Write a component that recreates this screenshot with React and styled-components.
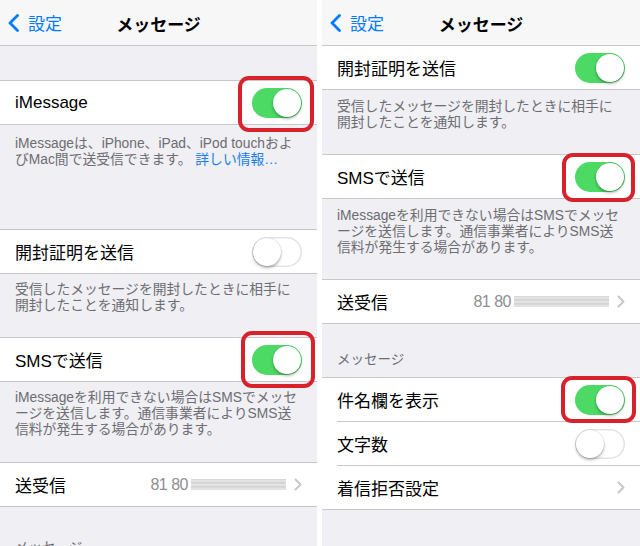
import React from "react";
import styled, { createGlobalStyle } from "styled-components";

const GlobalStyle = createGlobalStyle`
  html, body {
    margin: 0;
    padding: 0;
    background: #ffffff;
  }
  body {
    font-family: "Liberation Sans", "Noto Sans CJK JP", sans-serif;
    -webkit-font-smoothing: antialiased;
  }
`;

const Screens = styled.div`
  display: flex;
  gap: 5px;
  width: 640px;
  height: 546px;
  background: #ffffff;
`;

const Screen = styled.div`
  flex: none;
  width: ${(p) => p.$w}px;
  height: 546px;
  overflow: hidden;
  background: #efeff4;
  display: flex;
  flex-direction: column;
`;

const NavBar = styled.header`
  flex: none;
  height: 45px;
  border-bottom: 1px solid #c8c7cc;
  background: #f7f7f8;
  display: grid;
  grid-template-columns: 1fr auto 1fr;
  align-items: center;
  padding: 0 8px;
`;

const Back = styled.div`
  display: flex;
  align-items: center;
  gap: 9px;
  color: #007aff;
  font-size: 17px;
`;

const Title = styled.h1`
  margin: 0;
  padding-top: 2px;
  font-size: 17px;
  font-weight: 700;
  color: #000;
`;

const Group = styled.section`
  flex: none;
  background: #ffffff;
  border-top: ${(p) => (p.$noTop ? "none" : "1px solid #c8c7cc")};
  border-bottom: 1px solid #c8c7cc;
  margin-top: ${(p) => p.$top || 0}px;
`;

const Row = styled.div`
  height: 43px;
  display: flex;
  align-items: center;
  margin-left: 15px;
  padding-right: 15px;
  & + & {
    border-top: 1px solid #c8c7cc;
  }
`;

const Label = styled.span`
  flex: 1;
  font-size: 17px;
  color: #000;
  white-space: nowrap;
`;

const Value = styled.span`
  font-size: 16px;
  letter-spacing: -0.5px;
  color: #8e8e93;
`;

const Blurred = styled.span`
  width: 95px;
  height: 11px;
  margin-left: 3px;
  background: repeating-linear-gradient(
    180deg,
    #d2d2d4 0px,
    #e9e9ea 2px,
    #cdcdcf 4px
  );
  filter: blur(0.6px);
`;

const Chevron = styled.svg`
  flex: none;
  margin-left: 8px;
`;

const Footer = styled.p`
  flex: none;
  margin: 0;
  padding: ${(p) => p.$top ?? 8}px 15px ${(p) => p.$bottom ?? 24}px;
  font-size: 13.8px;
  line-height: 16px;
  color: #6d6d72;
  white-space: nowrap;
`;

const Link = styled.span`
  color: #1d7fe6;
`;

const Header = styled.h3`
  flex: none;
  margin: 0;
  padding: ${(p) => p.$top}px 15px 9px;
  font-weight: 400;
  font-size: 13.5px;
  line-height: 16px;
  color: #6d6d72;
`;

const Switch = styled.span`
  position: relative;
  flex: none;
  box-sizing: border-box;
  width: 50px;
  height: 30px;
  padding: 1px;
  border-radius: 15px;
  display: flex;
  align-items: center;
  justify-content: ${(p) => (p.$on ? "flex-end" : "flex-start")};
  background: ${(p) => (p.$on ? "#4cd964" : "#ffffff")};
  box-shadow: ${(p) => (p.$on ? "none" : "inset 0 0 0 1.5px #e3e3e8")};
`;

const Knob = styled.span`
  width: 28px;
  height: 28px;
  border-radius: 50%;
  background: #ffffff;
  box-shadow: 0 2px 3px rgba(0, 0, 0, 0.28), 0 0 0 0.5px rgba(0, 0, 0, 0.12);
`;

const Ring = styled.span`
  position: absolute;
  top: ${(p) => p.$r[0]}px;
  right: ${(p) => p.$r[1]}px;
  bottom: ${(p) => p.$r[2]}px;
  left: ${(p) => p.$r[3]}px;
  border: 4px solid #d8222b;
  border-radius: 11px;
  pointer-events: none;
`;

function Toggle({ on, ring }) {
  return (
    <Switch $on={on}>
      <Knob />
      {ring && <Ring $r={ring} />}
    </Switch>
  );
}

function Nav() {
  return (
    <NavBar>
      <Back>
        <svg width="11" height="18" viewBox="0 0 11 18">
          <path
            d="M9.5 1.5 L2 9 L9.5 16.5"
            fill="none"
            stroke="#007aff"
            strokeWidth="2.8"
            strokeLinecap="round"
            strokeLinejoin="round"
          />
        </svg>
        <span>設定</span>
      </Back>
      <Title>メッセージ</Title>
      <span />
    </NavBar>
  );
}

function Arrow() {
  return (
    <Chevron width="8" height="13" viewBox="0 0 8 13">
      <path
        d="M1.5 1.5 L6.5 6.5 L1.5 11.5"
        fill="none"
        stroke="#c7c7cc"
        strokeWidth="2"
        strokeLinecap="round"
        strokeLinejoin="round"
      />
    </Chevron>
  );
}

function Numbers() {
  return (
    <Row>
      <Label>送受信</Label>
      <Value>81 80</Value>
      <Blurred />
      <Arrow />
    </Row>
  );
}

export default function App() {
  return (
    <>
      <GlobalStyle />
      <Screens>
        <Screen $w={317}>
          <Nav />
          <Group $top={34}>
            <Row>
              <Label>iMessage</Label>
              <Toggle on ring={[-11.5, -12, -14.5, -14]} />
            </Row>
          </Group>
          <Footer $top={11} $bottom={61}>
            iMessageは、iPhone、iPad、iPod touchおよ
            <br />
            びMac間で送受信できます。 <Link>詳しい情報…</Link>
          </Footer>
          <Group>
            <Row>
              <Label>開封証明を送信</Label>
              <Toggle />
            </Row>
          </Group>
          <Footer $bottom={23}>
            受信したメッセージを開封したときに相手に
            <br />
            開封したことを通知します。
          </Footer>
          <Group>
            <Row>
              <Label>SMSで送信</Label>
              <Toggle on ring={[-13.5, -13, -13.5, -11]} />
            </Row>
          </Group>
          <Footer $bottom={24}>
            iMessageを利用できない場合はSMSでメッセ
            <br />
            ージを送信します。通信事業者によりSMS送
            <br />
            信料が発生する場合があります。
          </Footer>
          <Group>
            <Numbers />
          </Group>
          <Header $top={33}>メッセージ</Header>
        </Screen>

        <Screen $w={318}>
          <Nav />
          <Group $noTop>
            <Row>
              <Label>開封証明を送信</Label>
              <Toggle on />
            </Row>
          </Group>
          <Footer $top={9} $bottom={23}>
            受信したメッセージを開封したときに相手に
            <br />
            開封したことを通知します。
          </Footer>
          <Group>
            <Row>
              <Label>SMSで送信</Label>
              <Toggle on ring={[-8.5, -10, -10.5, -13]} />
            </Row>
          </Group>
          <Footer $top={9} $bottom={23}>
            iMessageを利用できない場合はSMSでメッセ
            <br />
            ージを送信します。通信事業者によりSMS送
            <br />
            信料が発生する場合があります。
          </Footer>
          <Group>
            <Numbers />
          </Group>
          <Header $top={28}>メッセージ</Header>
          <Group>
            <Row>
              <Label>件名欄を表示</Label>
              <Toggle on ring={[-8.5, -11, -8.5, -14]} />
            </Row>
            <Row>
              <Label>文字数</Label>
              <Toggle />
            </Row>
            <Row>
              <Label>着信拒否設定</Label>
              <Arrow />
            </Row>
          </Group>
        </Screen>
      </Screens>
    </>
  );
}
